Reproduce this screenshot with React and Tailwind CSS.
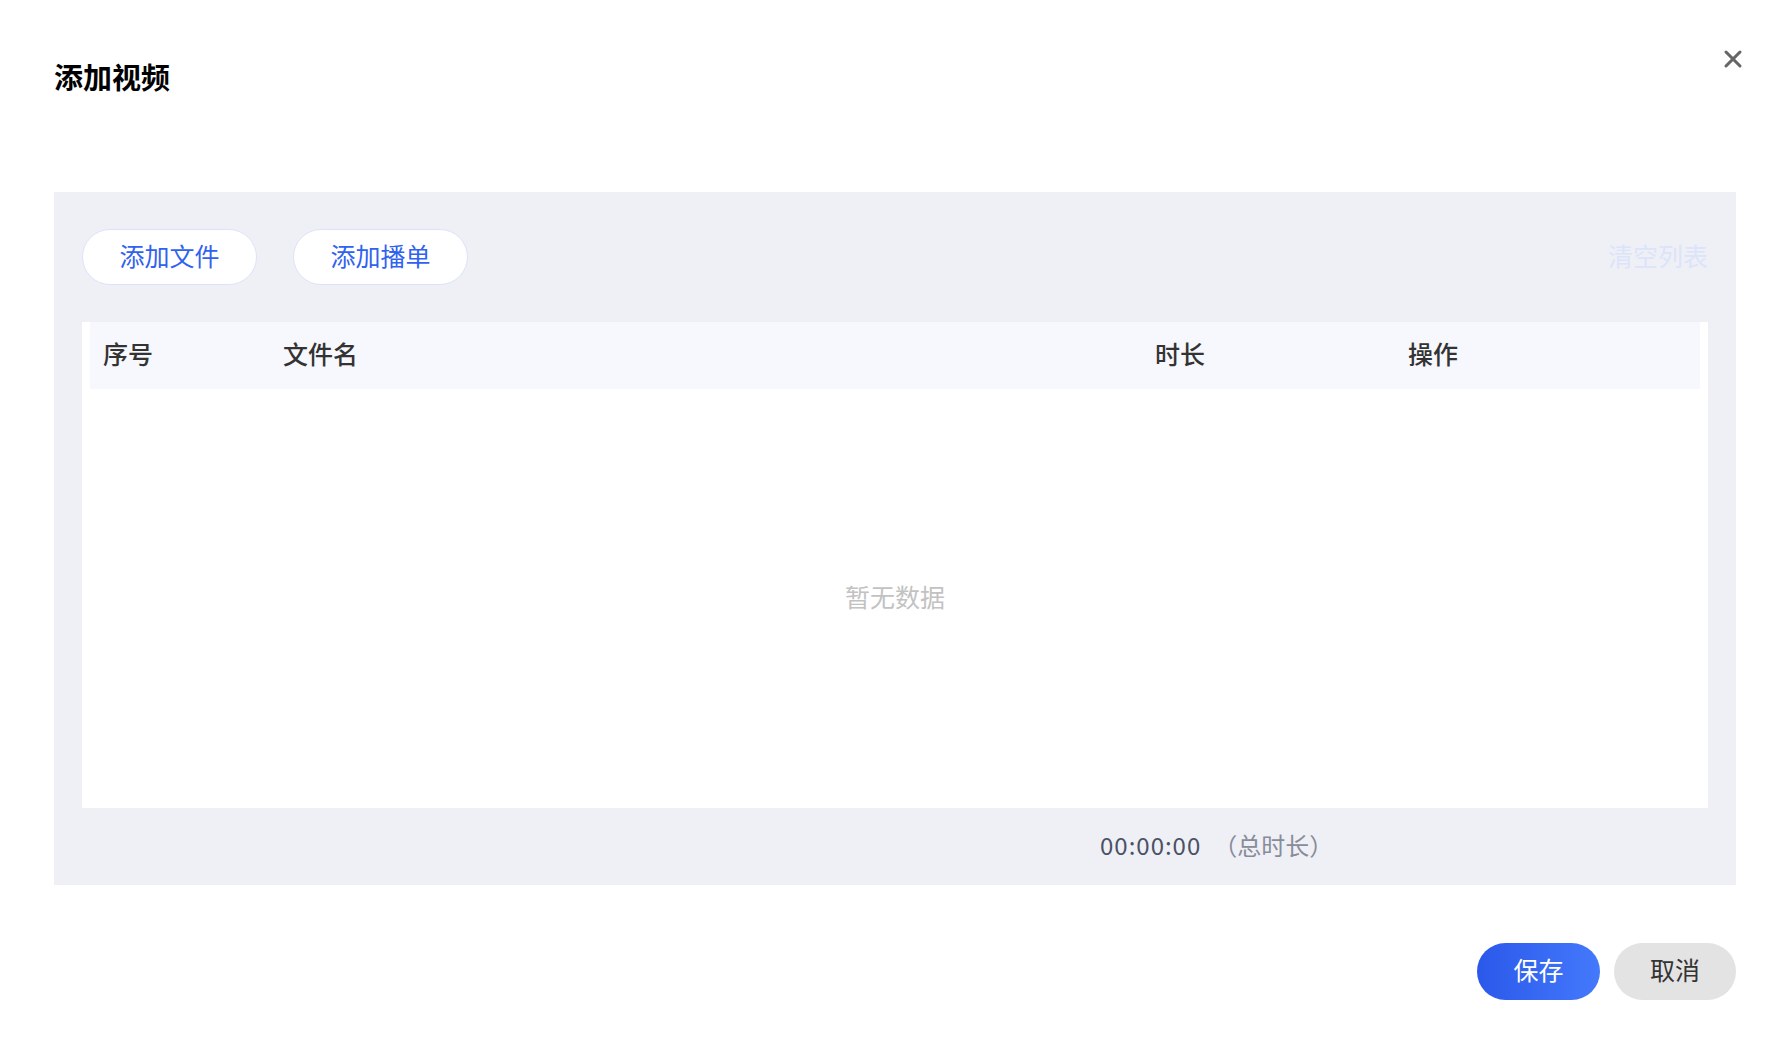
import { X } from 'lucide-react';

const FONT = { fontFamily: '"Noto Sans CJK SC", "Noto Sans", sans-serif' };

const PILL = 'h-[56px] w-[175px] pb-[3px] rounded-full bg-white border border-[#dbe3fb] text-[25px] text-[#3062f0] flex items-center justify-center';

export default function App() {
  return (
    <div className="relative w-[1792px] h-[1056px] bg-white pl-[54px] pr-[56px] pt-[58px]" style={FONT}>
      <button type="button" className="absolute right-[40px] top-[40px] w-[38px] h-[38px] flex items-center justify-center text-[#666]">
        <X size={28} strokeWidth={2.6} />
      </button>

      <h3 className="text-[29px] leading-[36px] font-bold text-black">添加视频</h3>

      <div className="mt-[98px] bg-[#eff0f5] px-[28px] pt-[37px]">
        <div className="flex items-center justify-between">
          <div className="flex gap-[36px]">
            <button type="button" className={PILL}>添加文件</button>
            <button type="button" className={PILL}>添加播单</button>
          </div>
          <button type="button" className="text-[25px] text-[#dce4fb] pb-[3px]">清空列表</button>
        </div>

        <div className="mt-[37px] bg-white px-[8px] h-[486px] flex flex-col">
          <div className="grid grid-cols-[180px_872px_253px_1fr] items-center h-[67px] pb-[3px] bg-[#f7f8fd] px-[13px] text-[25px] font-medium text-[#333]">
            <span>序号</span>
            <span>文件名</span>
            <span>时长</span>
            <span>操作</span>
          </div>
          <div className="flex-1 flex items-center justify-center pb-[3px] text-[25px] text-[#c2c2c2]">暂无数据</div>
        </div>

        <div className="h-[77px] flex items-center pb-[3px] pl-[1018px] text-[24px]">
          <span className="text-[#4b5065] tracking-[1px]">00:00:00</span>
          <span className="ml-[12px] text-[#888c9a]">（总时长）</span>
        </div>
      </div>

      <div className="mt-[58px] flex justify-end gap-[14px]">
        <button type="button" className="h-[57px] w-[123px] pb-[3px] rounded-full bg-gradient-to-r from-[#2b58ea] to-[#4479fc] text-white text-[25px]">保存</button>
        <button type="button" className="h-[57px] w-[122px] pb-[3px] rounded-full bg-[#e3e3e3] text-[#333] text-[25px]">取消</button>
      </div>
    </div>
  );
}
